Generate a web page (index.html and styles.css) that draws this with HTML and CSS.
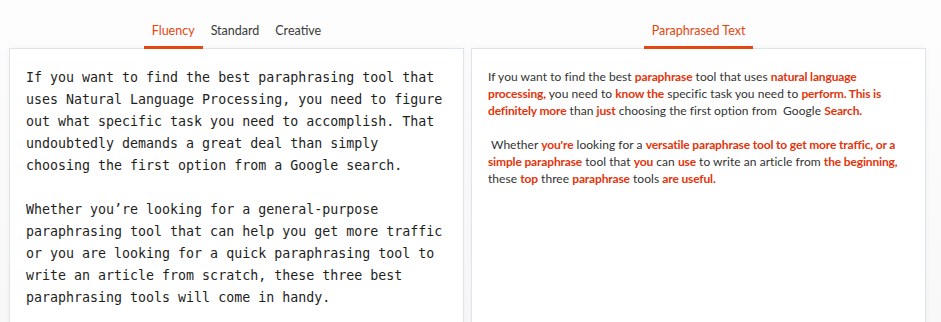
FILE: index.html
```html
<!DOCTYPE html>
<html lang="en">
<head>
    <meta charset="UTF-8">
    <meta name="viewport" content="width=device-width, initial-scale=1.0">
    <title>Paraphraser</title>
    <link rel="stylesheet" href="styles.css">
</head>
<body>
    <div class="workspace">
        <div class="column">
            <div class="tabs">
                <div class="tab active">Fluency</div>
                <div class="tab">Standard</div>
                <div class="tab">Creative</div>
            </div>
            <div class="panel input">
                <p>If you want to find the best paraphrasing tool that uses Natural Language Processing, you need to figure out what specific task you need to accomplish. That undoubtedly demands a great deal than simply choosing the first option from a Google search.</p>
                <p>Whether you’re looking for a general-purpose paraphrasing tool that can help you get more traffic or you are looking for a quick paraphrasing tool to write an article from scratch, these three best paraphrasing tools will come in handy.</p>
            </div>
        </div>
        <div class="column">
            <div class="tabs">
                <div class="tab active">Paraphrased Text</div>
            </div>
            <div class="panel output">
                <p>If you want to find the best <b>paraphrase</b> tool that uses <b>natural language processing,</b> you need to <b>know the</b> specific task you need to <b>perform. This is definitely more</b> than <b>just</b> choosing the first option from&nbsp; Google <b>Search.</b></p>
                <p>&nbsp;Whether <b>you're</b> looking for a <b>versatile paraphrase tool to get more traffic, or a simple paraphrase</b> tool that <b>you</b> can <b>use</b> to write an article from <b>the beginning,</b> these <b>top</b> three <b>paraphrase</b> tools <b>are useful.</b></p>
            </div>
        </div>
    </div>
</body>
</html>
```

FILE: styles.css
```css
html, body{
    margin: 0;
    padding: 0;
    height: 100%;
    overflow: hidden;
    font-family: Lato, "Open Sans", Arial, sans-serif;
}
body{
    background: linear-gradient(#fdfdfd, #f8f8f8);
}
.workspace{
    display: flex;
    gap: 7px;
    padding: 17px 15px 0 9px;
}
.column{
    width: 455px;
    display: flex;
    flex-direction: column;
}
.tabs{
    display: flex;
    justify-content: center;
}
.tab{
    padding: 6px 8px 7px;
    font-size: 12.5px;
    line-height: 16px;
    color: #3a3a3a;
    border-bottom: 3px solid transparent;
    margin-bottom: -1px;
    position: relative;
}
.tab.active{
    color: #e4470f;
    border-bottom-color: #e4470f;
}
.panel{
    background: #fff;
    border: 1px solid #dfe4ea;
    box-shadow: 0 0 6px rgba(0, 0, 0, 0.04);
    height: 300px;
}
.panel p{
    margin: 0;
}
.input{
    padding: 18px 16px 0;
    font-family: "DejaVu Sans Mono", monospace;
    font-size: 13.3px;
    line-height: 22px;
    color: #1e1e1e;
}
.input p + p{
    margin-top: 22px;
}
.output{
    padding: 19px 16px 0;
    font-size: 12px;
    line-height: 17px;
    letter-spacing: 0.05px;
    color: #333;
}
.output p + p{
    margin-top: 17px;
}
.output b{
    color: #e2350c;
    font-weight: 700;
    letter-spacing: -0.15px;
}
```
